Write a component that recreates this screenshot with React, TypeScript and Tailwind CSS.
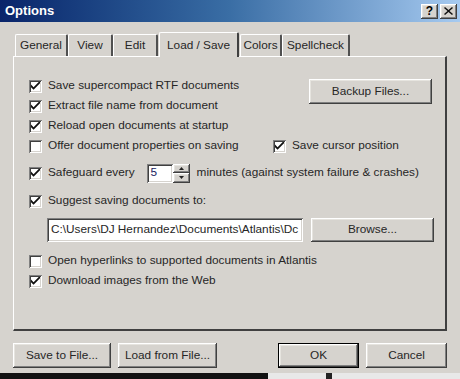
import React from 'react';

const raised =
  'bg-[#d6d3ce] shadow-[inset_-1px_-1px_#404040,inset_1px_1px_#ffffff,inset_-2px_-2px_#808080,inset_2px_2px_#e6e4df]';
const sunken =
  'bg-white shadow-[inset_1px_1px_#808080,inset_-1px_-1px_#ffffff,inset_2px_2px_#404040,inset_-2px_-2px_#d6d3ce]';

function Check({ checked }: { checked: boolean }) {
  return (
    <span className={`w-[13px] h-[13px] shrink-0 flex items-center justify-center ${sunken}`}>
      {checked && (
        <svg width="9" height="9" viewBox="0 0 7 7">
          <path d="M0 2 L0 4 L2 6 L7 1 L7 -1 L2 4 Z" fill="#111" />
        </svg>
      )}
    </span>
  );
}

function Row({ checked, label, className = '' }: { checked: boolean; label: string; className?: string }) {
  return (
    <div className={`flex items-center gap-[6px] h-[20px] ${className}`}>
      <Check checked={checked} />
      <span className="whitespace-nowrap">{label}</span>
    </div>
  );
}

function Button({ label, className = '' }: { label: string; className?: string }) {
  return (
    <div className={`flex items-center justify-center ${raised} ${className}`}>
      <span>{label}</span>
    </div>
  );
}

const tabs = [
  { label: 'General', w: 'w-[53px]' },
  { label: 'View', w: 'w-[45px]' },
  { label: 'Edit', w: 'w-[45px]' },
  { label: 'Load / Save', w: 'w-[80px]', active: true },
  { label: 'Colors', w: 'w-[42px]' },
  { label: 'Spellcheck', w: 'w-[68px]' },
];

export default function App() {
  return (
    <div
      className="w-[460px] h-[379px] overflow-hidden bg-[#d6d3ce] text-[#262626] text-[11.8px] flex flex-col"
      style={{ fontFamily: '"Liberation Sans", Arial, sans-serif' }}
    >
      {/* Title bar */}
      <div className="h-[22px] shrink-0 flex items-center pl-[5px] pr-[3px] bg-gradient-to-r from-[#0a246a] via-[#3a6ea5] to-[#a6caf0]">
        <span className="text-white font-bold text-[13px]">Options</span>
        <div className="ml-auto flex gap-[2px]">
          <div className={`w-[17px] h-[15px] flex items-center justify-center text-[12px] font-bold text-black ${raised}`}>?</div>
          <div className={`w-[17px] h-[15px] flex items-center justify-center ${raised}`}>
            <svg width="9" height="8" viewBox="0 0 9 8">
              <path d="M1 0 L4.5 3 L8 0 L9 1 L5.5 4 L9 7 L8 8 L4.5 5 L1 8 L0 7 L3.5 4 L0 1 Z" fill="#111" />
            </svg>
          </div>
        </div>
      </div>

      {/* Tabs */}
      <div className="flex items-end h-[34px] pl-[15px] shrink-0">
        {tabs.map((t) =>
          t.active ? (
            <div
              key={t.label}
              className={`${t.w} h-[25px] -mb-[1px] relative z-10 flex items-start justify-center pt-[4px] bg-[#d6d3ce] border-t border-l border-white border-r-2 border-r-[#404040] rounded-t-[2px] mx-[1px]`}
            >
              {t.label}
            </div>
          ) : (
            <div
              key={t.label}
              className={`${t.w} h-[22px] flex items-center justify-center bg-[#d6d3ce] border-t border-l border-white border-r-2 border-r-[#505050] rounded-t-[2px]`}
            >
              {t.label}
            </div>
          )
        )}
      </div>

      {/* Panel */}
      <div className="mx-[13px] w-[434px] h-[275px] shrink-0 border-t border-l border-white border-r-2 border-b-2 border-r-[#404040] border-b-[#404040] pl-[15px] pt-[19px]">
        <div className="flex">
          <div className="flex flex-col">
            <Row checked label="Save supercompact RTF documents" />
            <Row checked label="Extract file name from document" />
            <Row checked label="Reload open documents at startup" />
          </div>
          <Button label="Backup Files..." className="ml-auto mr-[13px] mt-[3px] w-[123px] h-[25px]" />
        </div>
        <div className="flex items-center">
          <Row checked={false} label="Offer document properties on saving" className="w-[244px]" />
          <Row checked label="Save cursor position" />
        </div>
        <div className="flex items-center gap-[6px] h-[22px] mt-[6px]">
          <Check checked />
          <span className="whitespace-nowrap">Safeguard every</span>
          <div className="flex h-[19px] ml-[6px]">
            <div className={`w-[26px] h-[19px] flex items-center pl-[4px] text-[#1a1a60] ${sunken}`}>5</div>
            <div className="flex flex-col w-[17px]">
              <div className={`h-[9px] flex items-center justify-center ${raised}`}>
                <svg width="5" height="3" viewBox="0 0 5 3"><path d="M2.5 0 L5 3 L0 3 Z" fill="#222" /></svg>
              </div>
              <div className={`h-[10px] flex items-center justify-center ${raised}`}>
                <svg width="5" height="3" viewBox="0 0 5 3"><path d="M0 0 L5 0 L2.5 3 Z" fill="#222" /></svg>
              </div>
            </div>
          </div>
          <span className="whitespace-nowrap ml-[1px]">minutes (against system failure &amp; crashes)</span>
        </div>
        <Row checked label="Suggest saving documents to:" className="mt-[7px]" />
        <div className="flex items-center mt-[6px] h-[25px] pl-[18px]">
          <div className={`w-[256px] h-[24px] flex items-center pl-[4px] overflow-hidden ${sunken}`}>
            <span className="whitespace-nowrap">C:\Users\DJ Hernandez\Documents\Atlantis\Dc</span>
          </div>
          <Button label="Browse..." className="ml-[8px] w-[123px] h-[24px]" />
        </div>
        <Row checked={false} label="Open hyperlinks to supported documents in Atlantis" className="mt-[9px]" />
        <Row checked label="Download images from the Web" />
      </div>

      {/* Bottom buttons */}
      <div className="flex items-center h-[35px] mt-[7px] px-[13px] shrink-0">
        <Button label="Save to File..." className="w-[98px] h-[25px]" />
        <Button label="Load from File..." className="w-[99px] h-[25px] ml-[7px]" />
        <div className="ml-auto border border-black">
          <Button label="OK" className="w-[79px] h-[23px]" />
        </div>
        <Button label="Cancel" className="w-[81px] h-[25px] ml-[7px]" />
      </div>

      {/* Strip of whatever lies behind */}
      <div className="flex h-[6px] mt-auto shrink-0">
        <div className="w-[268px] bg-[#111]" />
        <div className="w-[58px] bg-[#e8e8e8]" />
        <div className="w-[6px] bg-[#222]" />
        <div className="flex-1 bg-[#e8e8e8]" />
      </div>
    </div>
  );
}
